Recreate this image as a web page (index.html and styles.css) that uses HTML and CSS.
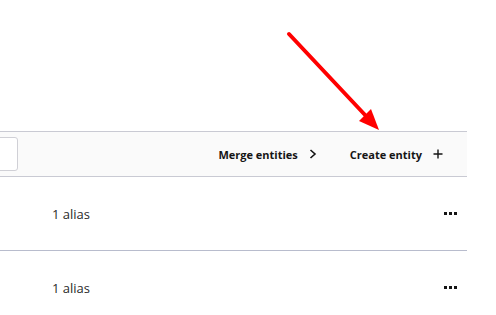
FILE: index.html
```html
<!DOCTYPE html>
<html lang="en">
<head>
    <meta charset="UTF-8">
    <meta name="viewport" content="width=device-width, initial-scale=1.0">
    <title>Entities</title>
    <link rel="stylesheet" href="styles.css">
</head>
<body>
    <div class="page">
        <div class="toolbar">
            <input type="text" class="search">
            <div class="actions">
                <button class="action">Merge entities <span class="icon">
                    <svg width="8" height="10" viewBox="0 0 8 10"><path d="M1.5 1 L6 5 L1.5 9" fill="none" stroke="#151515" stroke-width="1.6"/></svg>
                </span></button>
                <button class="action">Create entity <span class="icon">
                    <svg width="10" height="10" viewBox="0 0 10 10"><path d="M5 0.5 V9.5 M0.5 5 H9.5" stroke="#151515" stroke-width="1.4"/></svg>
                </span></button>
            </div>
        </div>
        <div class="row">
            <span class="count">1 alias</span>
            <span class="kebab"><i></i><i></i><i></i></span>
        </div>
        <div class="row">
            <span class="count">1 alias</span>
            <span class="kebab"><i></i><i></i><i></i></span>
        </div>

        <svg class="arrow" width="496" height="140" viewBox="0 0 496 140">
            <line x1="289" y1="34" x2="366" y2="116" stroke="#ff0000" stroke-width="4" stroke-linecap="round"/>
            <polygon points="379,130 359,121 371,109" fill="#ff0000"/>
        </svg>
    </div>
</body>
</html>
```
FILE: styles.css
```css
* {
    margin: 0;
    padding: 0;
    box-sizing: border-box;
}

body {
    font-family: 'Open Sans', 'Noto Sans', sans-serif;
    background: #ffffff;
    color: #151515;
    overflow: hidden;
}

.page {
    position: relative;
    padding-top: 131px;
    width: 496px;
    height: 315px;
}

.toolbar {
    width: 467px;
    height: 46px;
    display: flex;
    align-items: center;
    background: #fafafa;
    border-top: 1px solid #c9cad3;
    border-bottom: 1px solid #c9cad3;
}

.search {
    width: 218px;
    height: 34px;
    margin-left: -200px;
    border: 1px solid #d0d0d6;
    border-radius: 3px;
    background: #ffffff;
}

.actions {
    margin-left: auto;
    margin-right: 24px;
    display: flex;
    gap: 33px;
}

.action {
    display: flex;
    align-items: center;
    gap: 11px;
    font-family: inherit;
    font-size: 11px;
    font-weight: 700;
    color: #151515;
    background: none;
    border: none;
}

.icon {
    display: flex;
}

.row {
    width: 467px;
    height: 74px;
    display: flex;
    align-items: center;
    border-bottom: 1px solid #b8bccd;
}

.count {
    padding-left: 52px;
    font-size: 13px;
    color: #2a2a2a;
}

.kebab {
    margin-left: auto;
    margin-right: 10px;
    display: flex;
    gap: 2px;
}

.kebab i {
    width: 3px;
    height: 3px;
    background: #151515;
}

.arrow {
    position: absolute;
    left: 0;
    top: 0;
}
```
